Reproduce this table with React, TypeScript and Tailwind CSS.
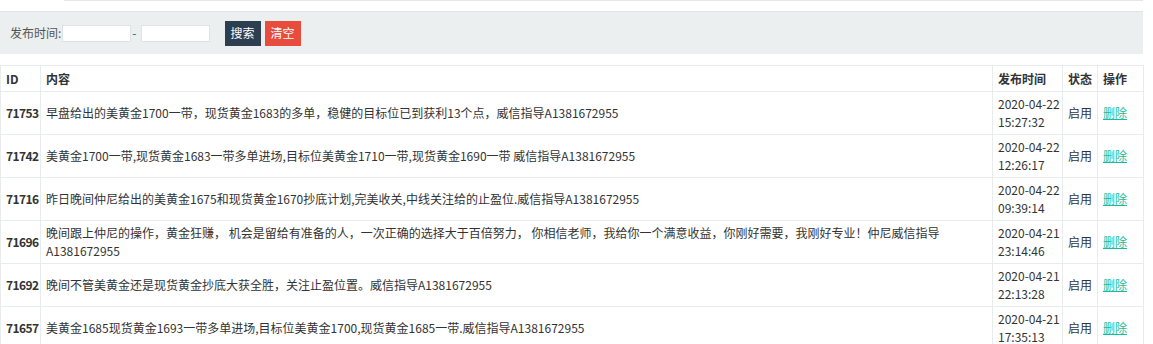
import React from 'react'

interface Row {
  id: number
  content: string
  date: string
  time: string
}

const rows: Row[] = [
  { id: 71753, content: '早盘给出的美黄金1700一带，现货黄金1683的多单，稳健的目标位已到获利13个点，威信指导A1381672955', date: '2020-04-22', time: '15:27:32' },
  { id: 71742, content: '美黄金1700一带,现货黄金1683一带多单进场,目标位美黄金1710一带,现货黄金1690一带 威信指导A1381672955', date: '2020-04-22', time: '12:26:17' },
  { id: 71716, content: '昨日晚间仲尼给出的美黄金1675和现货黄金1670抄底计划,完美收关,中线关注给的止盈位.威信指导A1381672955', date: '2020-04-22', time: '09:39:14' },
  { id: 71696, content: '晚间跟上仲尼的操作，黄金狂赚， 机会是留给有准备的人，一次正确的选择大于百倍努力， 你相信老师，我给你一个满意收益，你刚好需要，我刚好专业！仲尼威信指导A1381672955', date: '2020-04-21', time: '23:14:46' },
  { id: 71692, content: '晚间不管美黄金还是现货黄金抄底大获全胜，关注止盈位置。威信指导A1381672955', date: '2020-04-21', time: '22:13:28' },
  { id: 71657, content: '美黄金1685现货黄金1693一带多单进场,目标位美黄金1700,现货黄金1685一带.威信指导A1381672955', date: '2020-04-21', time: '17:35:13' },
]

const cell = 'border border-[#e8ecec] px-[5px] whitespace-nowrap'

const App: React.FC = () => {
  return (
    <div className="w-[1153px] h-[344px] overflow-hidden bg-white text-[12px] text-[#333] font-['Noto_Sans_CJK_SC','Noto_Sans',sans-serif]">
      {/* top strip */}
      <div className="ml-[64px] w-[1079px] h-[11px] border-t border-[#e3e7e8]" />

      {/* search bar */}
      <div className="w-[1143px] h-[43px] bg-[#ebeff0] border-t border-[#dfe4e5] flex items-center pl-[10px]">
        <span className="text-[#555]">发布时间:</span>
        <input className="ml-[1px] w-[69px] h-[17px] bg-white border border-[#dde3e6] outline-none" />
        <span className="mx-[1px] text-[#555]">-</span>
        <input className="ml-[3px] w-[69px] h-[17px] bg-white border border-[#dde3e6] outline-none" />
        <button className="ml-[15px] h-[25px] px-[6px] bg-[#2c3e50] text-white text-[12px] leading-none">搜索</button>
        <button className="ml-[4px] h-[25px] px-[6px] bg-[#e74c3c] text-white text-[12px] leading-none">清空</button>
      </div>

      {/* table */}
      <table className="mt-[11px] w-[1143px] border-collapse table-fixed">
        <colgroup>
          <col className="w-[40px]" />
          <col className="w-[952px]" />
          <col className="w-[70px]" />
          <col className="w-[35px]" />
          <col className="w-[46px]" />
        </colgroup>
        <thead>
          <tr className="h-[26px]">
            <th className={`${cell} text-left font-bold`}>ID</th>
            <th className={`${cell} text-left font-bold`}>内容</th>
            <th className={`${cell} text-left font-bold`}>发布时间</th>
            <th className={`${cell} text-left font-bold`}>状态</th>
            <th className={`${cell} text-left font-bold`}>操作</th>
          </tr>
        </thead>
        <tbody>
          {rows.map((r) => (
            <tr key={r.id} className="h-[43px]">
              <td className={`${cell} font-bold tracking-[-0.6px]`}>{r.id}</td>
              <td className="border border-[#e8ecec] px-[5px] leading-[18px] py-[3px]">{r.content}</td>
              <td className={`${cell} leading-[18px] py-[3px]`}>
                {r.date}
                <br />
                {r.time}
              </td>
              <td className={cell}>启用</td>
              <td className={cell}>
                <a href="#" className="text-[#18bc9c] underline">删除</a>
              </td>
            </tr>
          ))}
        </tbody>
      </table>
    </div>
  )
}

export default App
